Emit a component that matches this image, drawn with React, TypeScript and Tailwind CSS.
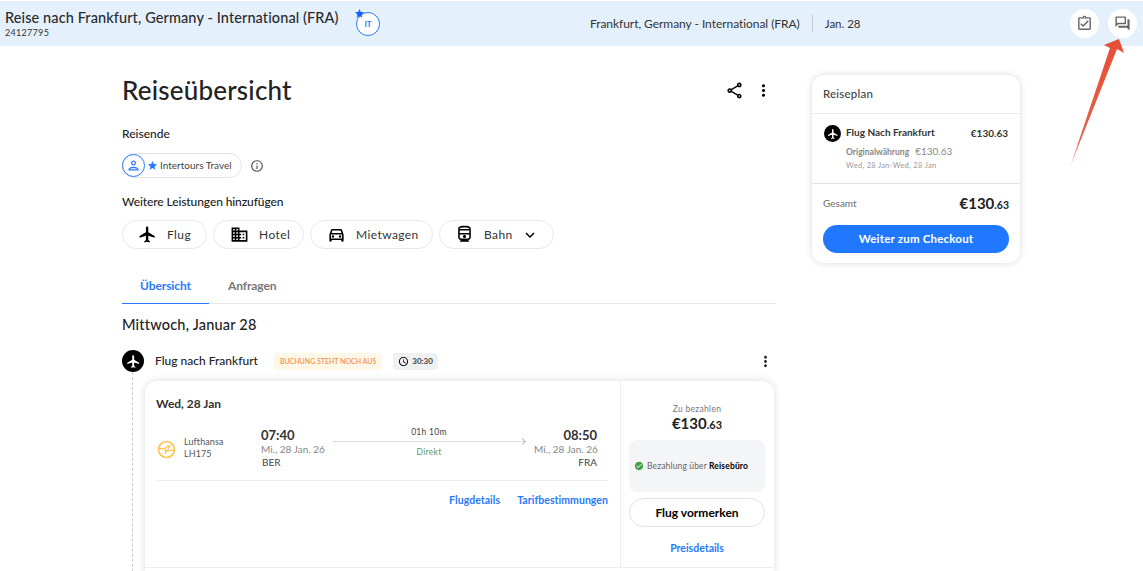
import {
  MdCheckCircle,
  MdExpandMore,
  MdFlight,
  MdInfoOutline,
  MdMoreVert,
  MdOutlineAccessTime,
  MdOutlineAssignmentTurnedIn,
  MdOutlineDirectionsCar,
  MdOutlineDomain,
  MdOutlineDirectionsRailway,
  MdOutlinePerson,
  MdOutlineQuestionAnswer,
  MdOutlineShare,
  MdStar,
} from "react-icons/md"

const Price = ({ big, small }: { big: string; small: string }) => (
  <span className="font-bold text-[#222]">
    <span className={big}>€130</span>
    <span className={small}>.63</span>
  </span>
)

const AddButton = ({ icon, label, className, extra }: { icon: JSX.Element; label: string; className: string; extra?: JSX.Element }) => (
  <button className={`h-[29px] rounded-full border border-[#e8e8e8] flex items-center text-[12px] text-[#333] tracking-[0.4px] ${className}`}>
    <span className="text-[19px] text-black">{icon}</span>
    <span>{label}</span>
    {extra}
  </button>
)

const Crane = () => (
  <svg viewBox="0 0 20 20" className="w-[19px] h-[19px]" fill="none" stroke="#fbc44e">
    <circle cx="10" cy="10" r="8.4" strokeWidth="1.7" />
    <path d="M2 9h5.5l2.5 2h7.5M8.5 8.5l3.5-2.5 1.5 .3-2 3M8 11.5h5M10 11l-1.5 3.5" strokeWidth="1.3" />
  </svg>
)

export default function App() {
  return (
    <div className="relative h-[571px] w-[1143px] overflow-hidden bg-white font-['Lato','Noto_Sans',sans-serif] text-[#222]">
      <header className="mt-px h-[45px] bg-[#e5f0fd] flex items-center pl-[5px] pr-[6px]">
        <div className="w-[339px]">
          <div className="text-[14.5px] leading-[18px] font-medium text-[#2b2b2b] tracking-[0.1px] whitespace-nowrap">Reise nach Frankfurt, Germany - International (FRA)</div>
          <div className="text-[9px] leading-[11px] text-[#333] tracking-[0.3px]">24127795</div>
        </div>
        <div className="relative ml-[12px] w-6 h-6 rounded-full bg-white border border-[#2979ff] text-[#2979ff] text-[8px] font-bold flex items-center justify-center">
          IT
          <MdStar className="absolute -top-[5px] -left-[3px] text-[11px] text-[#0f62fe]" />
        </div>
        <div className="ml-[210px] text-[12px] tracking-[-0.05px] text-[#333] whitespace-nowrap">Frankfurt, Germany - International (FRA)</div>
        <div className="ml-3 h-[17px] border-l border-[#c5ccd6]" />
        <div className="ml-3 text-[11.5px] text-[#333]">Jan. 28</div>
        <div className="ml-auto flex gap-[9px]">
          <div className="w-[29px] h-[29px] rounded-full bg-white flex items-center justify-center text-[#666] text-[17px]"><MdOutlineAssignmentTurnedIn /></div>
          <div className="w-[29px] h-[29px] rounded-full bg-white flex items-center justify-center text-[#666] text-[17px]"><MdOutlineQuestionAnswer /></div>
        </div>
      </header>

      <main className="flex pl-[122px]">
        <section className="w-[654px]">
          <div className="mt-[27px] flex items-center h-[34px]">
            <h1 className="text-[26px] font-medium text-[#222] tracking-[0.2px]">Reiseübersicht</h1>
            <div className="ml-auto mr-[3px] flex items-center gap-[10px] text-[19px] text-black">
              <MdOutlineShare />
              <MdMoreVert />
            </div>
          </div>

          <div className="mt-[19px] text-[12px] leading-[16px] font-medium">Reisende</div>
          <div className="mt-[11px] flex items-center">
            <div className="h-[25px] w-[120px] rounded-full border border-[#e4e4e4] flex items-center text-[10px] text-[#444]">
              <span className="-ml-px w-[23px] h-[23px] rounded-full border-[1.5px] border-[#2979ff] flex items-center justify-center text-[15px] text-[#2979ff]"><MdOutlinePerson /></span>
              <MdStar className="ml-[2px] mr-[2px] text-[#2979ff] text-[11px]" />
              Intertours Travel
            </div>
            <MdInfoOutline className="ml-[8px] text-[14px] text-[#555]" />
          </div>

          <div className="mt-[16px] text-[12px] leading-[16px] font-medium tracking-[-0.1px]">Weitere Leistungen hinzufügen</div>
          <div className="mt-[10px] flex gap-[6px]">
            <AddButton icon={<MdFlight />} label="Flug" className="w-[85px] pl-[15px] gap-[10px]" />
            <AddButton icon={<MdOutlineDomain />} label="Hotel" className="w-[91px] pl-[16px] gap-[10px]" />
            <AddButton icon={<MdOutlineDirectionsCar />} label="Mietwagen" className="w-[123px] pl-[16px] gap-[10px]" />
            <AddButton icon={<MdOutlineDirectionsRailway />} label="Bahn" className="w-[115px] pl-[15px] gap-[10px]" extra={<MdExpandMore className="-ml-[2px] text-[18px] text-black" />} />
          </div>

          <div className="mt-[21px] h-[34px] border-b border-[#e6e6e6] flex text-[12px] font-bold tracking-[-0.1px]">
            <div className="w-[87px] h-[34px] border-b border-[#2979ff] text-[#2979ff] text-center pt-[7px]">Übersicht</div>
            <div className="ml-[19px] text-[#777] pt-[7px]">Anfragen</div>
          </div>

          <div className="mt-[12px] text-[14.5px] leading-[18px] font-medium tracking-[0.2px]">Mittwoch, Januar 28</div>

          <div className="mt-[16px] flex items-center h-[22px]">
            <span className="w-[22px] h-[22px] rounded-full bg-black text-white flex items-center justify-center text-[15px]"><MdFlight /></span>
            <span className="ml-[11px] text-[12px] font-medium">Flug nach Frankfurt</span>
            <span className="ml-4 h-[17px] px-[6px] rounded bg-[#fff8e8] text-[#f58a42] text-[7px] font-medium flex items-center">BUCHUNG STEHT NOCH AUS</span>
            <span className="ml-[11px] h-[17px] px-[5px] rounded bg-[#eff0f2] text-[8px] font-bold text-[#444] flex items-center gap-[3px]"><MdOutlineAccessTime className="text-[11px] text-black" />30:30</span>
            <MdMoreVert className="ml-auto mr-[2px] text-[17px] text-[#222]" />
          </div>

          <div className="relative mt-[9px] flex">
            <div className="ml-[10px] -mt-[9px] w-[13px] h-[210px] border-l border-dashed border-[#ccc]" />
            <div className="w-[629px] h-[192px] rounded-t-xl bg-white shadow-[0_0_8px_rgba(0,0,0,0.14)]">
              <div className="h-[187px] flex border-b border-[#eee]">
                <div className="w-[476px] border-r border-[#eee] pl-[11px] pr-[12px]">
                  <div className="mt-[15px] text-[12px] leading-[16px] font-bold text-[#333]">Wed, 28 Jan</div>
                  <div className="mt-[15px] h-[42px] flex">
                    <div className="mt-[13px] mr-[8px] ml-[1px]"><Crane /></div>
                    <div className="mt-[9px] w-[77px] text-[9px] leading-[12px] text-[#555] tracking-[0.1px]">
                      <div>Lufthansa</div>
                      <div>LH175</div>
                    </div>
                    <div className="w-[72px]">
                      <div className="text-[13px] leading-[16px] font-bold text-[#333]">07:40</div>
                      <div className="text-[10px] leading-[12px] text-[#888] whitespace-nowrap">Mi., 28 Jan. 26</div>
                      <div className="text-[10px] leading-[14px] text-[#444] ml-px">BER</div>
                    </div>
                    <div className="w-[192px] text-center text-[8.5px] tracking-[0.3px]">
                      <div className="leading-[12px] text-[#444] -mt-[1px]">01h 10m</div>
                      <div className="relative mt-[3px] h-px bg-[#ddd]">
                        <span className="absolute right-0 -top-[2px] w-[5px] h-[5px] border-t border-r border-[#bbb] rotate-45" />
                      </div>
                      <div className="mt-[4px] leading-[12px] text-[#5c9a5c]">Direkt</div>
                    </div>
                    <div className="ml-[9px] w-[63px] text-right">
                      <div className="text-[13px] leading-[16px] font-bold text-[#333]">08:50</div>
                      <div className="text-[10px] leading-[12px] text-[#888] whitespace-nowrap">Mi., 28 Jan. 26</div>
                      <div className="text-[10px] leading-[14px] text-[#444]">FRA</div>
                    </div>
                  </div>
                  <div className="mt-[11px] h-px bg-[#eee]" />
                  <div className="mt-[12px] flex justify-end gap-[17px] text-[10.5px] leading-[14px] font-bold text-[#2979ff] tracking-[0.05px]">
                    <span>Flugdetails</span>
                    <span>Tarifbestimmungen</span>
                  </div>
                </div>
                <div className="w-[153px] pl-[8px] pr-[9px]">
                  <div className="mt-[23px] text-center text-[8.5px] leading-[10px] text-[#777] tracking-[0.3px]">Zu bezahlen</div>
                  <div className="text-center leading-[18px]"><Price big="text-[15px]" small="text-[11px]" /></div>
                  <div className="mt-[6px] h-[52px] rounded-lg bg-[#f4f5f7] flex items-center pl-[5px] text-[8.5px] text-[#666] tracking-[0.15px]">
                    <MdCheckCircle className="text-[10px] text-[#43a047] mr-[3px]" />
                    Bezahlung über <span className="ml-[2px] font-bold text-black">Reisebüro</span>
                  </div>
                  <button className="mt-[6px] w-full h-[29px] rounded-full border border-[#e2e2e2] text-[12px] font-bold text-black">Flug vormerken</button>
                  <div className="mt-[14px] text-center text-[10.5px] leading-[14px] font-bold text-[#2979ff]">Preisdetails</div>
                </div>
              </div>
            </div>
          </div>
        </section>

        <aside className="ml-[36px] mt-[29px] w-[208px] h-[188px] rounded-xl bg-white shadow-[0_0_7px_rgba(0,0,0,0.15)]">
          <div className="h-[39px] border-b border-[#e8e8e8] pl-[11px] flex items-center text-[11.5px] font-medium text-[#444] tracking-[0.2px]">Reiseplan</div>
          <div className="h-[70px] border-b border-[#e4e4e8] px-[12px] pt-[11px] flex">
            <span className="w-[17px] h-[17px] rounded-full bg-black text-white flex items-center justify-center text-[12px] shrink-0"><MdFlight /></span>
            <div className="ml-[5px] flex-1">
              <div className="flex justify-between text-[10px] leading-[14px] font-bold text-[#333]">
                <span>Flug Nach Frankfurt</span>
                <span className="mt-px">€130.63</span>
              </div>
              <div className="mt-[5px] text-[8.5px] leading-[12px] text-[#888]"><span className="font-bold">Originalwährung</span><span className="ml-[6px] text-[10px]">€130.63</span></div>
              <div className="mt-[3px] text-[7.5px] leading-[10px] text-[#999] tracking-[0.3px]">Wed, 28 Jan-Wed, 28 Jan</div>
            </div>
          </div>
          <div className="px-[11px] mt-[9px] flex items-center justify-between h-[20px]">
            <span className="text-[10px] text-[#777] font-medium">Gesamt</span>
            <Price big="text-[15px]" small="text-[10.5px]" />
          </div>
          <button className="mt-[12px] mx-[11px] w-[186px] h-[28px] rounded-full bg-[#1f78ff] text-white text-[11.5px] font-bold tracking-[0.2px]">Weiter zum Checkout</button>
        </aside>
      </main>

      <svg className="absolute left-0 top-0 pointer-events-none" width="1143" height="571">
        <defs>
          <linearGradient id="arrow" x1="1070" y1="167" x2="1115" y2="50" gradientUnits="userSpaceOnUse">
            <stop offset="0" stopColor="#f7b5a5" />
            <stop offset="0.25" stopColor="#e8604a" />
            <stop offset="1" stopColor="#e55039" />
          </linearGradient>
        </defs>
        <polygon points="1070,167 1110,48 1104,45 1119,39 1124,53 1117,49" fill="url(#arrow)" />
      </svg>
    </div>
  )
}
